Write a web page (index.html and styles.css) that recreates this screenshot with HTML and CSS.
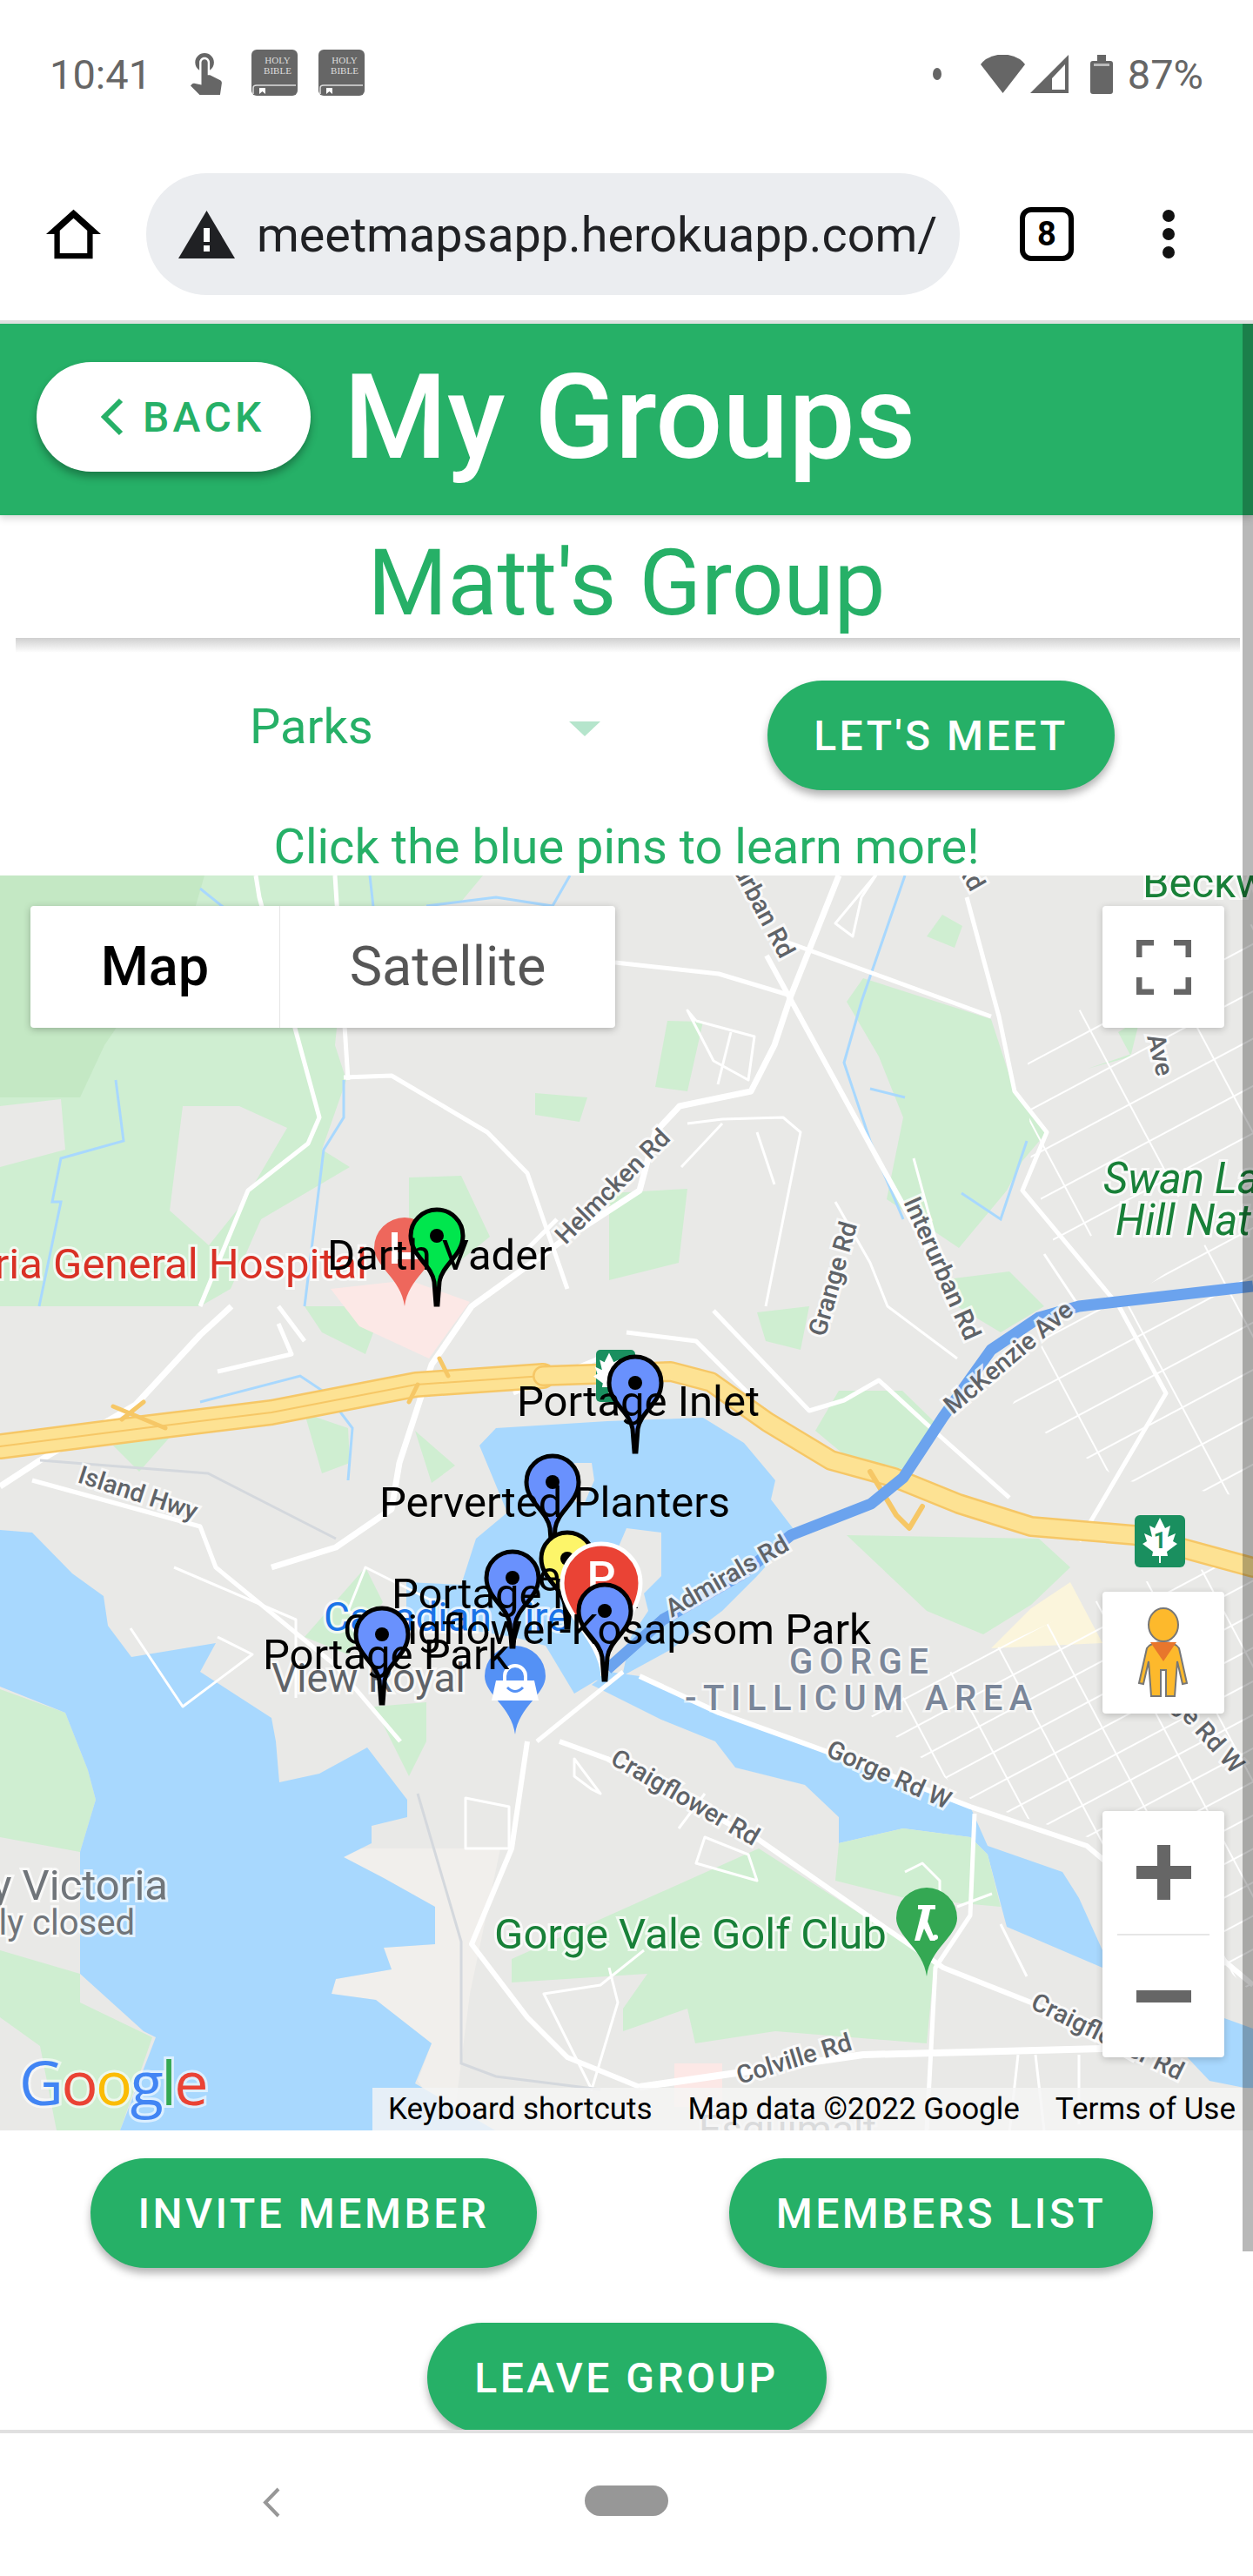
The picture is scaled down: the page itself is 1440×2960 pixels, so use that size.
FILE: index.html
```html
<!DOCTYPE html>
<html>
<head>
<meta charset="UTF-8">
<title>My Groups</title>
<link rel="stylesheet" href="styles.css">
</head>
<body>
  <!-- phone status bar -->
  <div class="status-bar">
    <span class="clock">10:41</span>
    <svg class="ic-touch" viewBox="5 3 15 20"><path fill="#666" d="M9 11.24V7.5C9 6.12 10.12 5 11.5 5S14 6.12 14 7.5v3.74c1.21-.81 2-2.18 2-3.74C16 5.01 13.99 3 11.5 3S7 5.01 7 7.5c0 1.56.79 2.93 2 3.74zm9.84 4.63l-4.54-2.26c-.17-.07-.35-.11-.54-.11H13v-6c0-.83-.67-1.5-1.5-1.5S10 6.67 10 7.5v10.74l-3.43-.72c-.08-.01-.15-.03-.24-.03-.31 0-.59.13-.79.33l-.79.8 4.94 4.94c.27.27.65.44 1.06.44h6.79c.75 0 1.33-.55 1.44-1.28l.75-5.27c.01-.07.02-.14.02-.2 0-.62-.38-1.16-.91-1.38z"/></svg>
    <svg class="ic-bible" viewBox="0 0 53 53">
      <rect width="53" height="53" rx="6" fill="#666"/>
      <path d="M2 51V44q0-3 4-3H51" fill="none" stroke="#ddd" stroke-width="1.5"/>
      <path d="M9 44h7v7l-3.500-3-3.500 3z" fill="#fff"/>
      <text class="bible-txt" x="30" y="16">HOLY</text>
      <text class="bible-txt" x="30" y="28">BIBLE</text>
    </svg>
    <svg class="ic-bible" viewBox="0 0 53 53">
      <rect width="53" height="53" rx="6" fill="#666"/>
      <path d="M2 51V44q0-3 4-3H51" fill="none" stroke="#ddd" stroke-width="1.5"/>
      <path d="M9 44h7v7l-3.500-3-3.500 3z" fill="#fff"/>
      <text class="bible-txt" x="30" y="16">HOLY</text>
      <text class="bible-txt" x="30" y="28">BIBLE</text>
    </svg>
    <span class="status-right">
      <span class="dot"></span>
      <svg class="ic-wifi" viewBox="0 0 53 44"><path fill="#666" d="M26.500 44L1 11Q3 8 7 5 26.500-6 46 5 50 8 52 11z"/></svg>
      <svg class="ic-signal" viewBox="0 0 44 44"><path fill="#666" fill-rule="evenodd" d="M44 0V44H0zM40 11L25 27V40H40z"/></svg>
      <svg class="ic-battery" viewBox="0 0 26 45"><path fill="#666" d="M8 0h10v7h5q3 0 3 3v32q0 3-3 3H3q-3 0-3-3V10q0-3 3-3h5z"/><rect x="4" y="10" width="18" height="3" fill="#bbb"/></svg>
      <span class="clock">87%</span>
    </span>
  </div>

  <!-- browser toolbar -->
  <div class="toolbar">
    <svg class="ic-home" viewBox="2 3 20 18"><path fill="#000" fill-rule="evenodd" d="M12 3L2 12h3v9h14v-9h3zM12 6.200l5 4.500V19H7v-8.300z"/></svg>
    <div class="url-pill">
      <svg class="ic-warn" viewBox="0 0 65 55"><path fill="#202124" d="M32.500 0L65 55H0z"/><rect x="29" y="20" width="7" height="16" fill="#fff"/><rect x="29" y="40" width="7" height="7" fill="#fff"/></svg>
      <span class="url-text">meetmapsapp.herokuapp.com/</span>
    </div>
    <div class="tab-count">8</div>
    <div class="menu-dots"><span></span><span></span><span></span></div>
  </div>

  <div class="page">
    <div class="app-header">
      <a class="back-btn">
        <svg class="ic-chevron" viewBox="0 0 26 44"><path d="M23 3L4 22l19 19" fill="none" stroke="#26b067" stroke-width="6"/></svg>
        BACK
      </a>
      <h1>My Groups</h1>
    </div>

    <h2 class="group-title">Matt's Group</h2>
    <div class="divider"></div>

    <div class="filter-row">
      <div class="select-box">
        <span>Parks</span>
        <span class="arrow"></span>
      </div>
      <button class="btn">LET'S MEET</button>
    </div>

    <p class="hint">Click the blue pins to learn more!</p>

    <div class="map">
      <svg class="map-canvas" viewBox="0 1005 1440 1442">
        <defs>
          <pattern id="grid" width="62" height="34" patternUnits="userSpaceOnUse" patternTransform="rotate(-28)">
            <path d="M0 0H62M0 0V34" fill="none" stroke="#fff" stroke-width="4"/>
          </pattern>
          <pattern id="grid-wide" width="110" height="48" patternUnits="userSpaceOnUse" patternTransform="rotate(-28)">
            <path d="M0 0H110M0 0V48" fill="none" stroke="#fff" stroke-width="4"/>
          </pattern>
          <path id="pin" d="M-1 0L-3-26C-6-46-30-56-30-79A30 30 0 1 1 30-79C30-56 6-46 3-26L1 0Z" stroke="#000" stroke-width="5"/>
          <path id="drop" d="M0 0C-4-32-35-46-35-67A35 35 0 1 1 35-67C35-46 4-32 0 0Z"/>
          <path id="leaf" d="M0-24L6-12 12-15 9-2 18-6 15 3 20 6 8 15 9 20H1V28H-1V20H-9L-8 15-20 6-15 3-18-6-9-2-12-15-6-12Z" fill="#fff"/>
        </defs>

        <rect x="0" y="1005" width="1440" height="1442" fill="#e9e9e7"/>

        <!-- parks -->
        <g fill="#cfeed1">
          <path d="M0 1005H555L530 1035 400 1050 385 1200 398 1240 370 1320 402 1340 300 1400 265 1480 230 1500H0z"/>
          <path fill="#c4e8c4" d="M0 1005H235L222 1050 120 1200 92 1260H0z"/>
          <path d="M992 1123L1139 1170 1166 1253 1203 1300 1175 1333 1157 1367 1102 1433 1019 1377 1038 1283 1010 1213 973 1150z"/>
          <path d="M767 1172L808 1173 790 1253 753 1248zM615 1255L675 1260 666 1288 615 1280zM1083 1050L1106 1063 1097 1088 1065 1075z"/>
          <path d="M1250 1227L1300 1213 1285 1185 1310 1170 1300 1210 1330 1200z"/>
          <path d="M470 1352L530 1350 563 1420 510 1463 470 1440zM700 1370L790 1365 780 1450 700 1470z"/>
          <path d="M350 1500H440L420 1555 370 1530zM870 1507L930 1500 920 1550 880 1540z"/>
          <path d="M1080 1470L1160 1460 1200 1500 1150 1530 1100 1500z"/>
          <path d="M964 1597L1037 1597 1074 1633 1037 1687 973 1673 937 1643z"/>
          <path d="M973 1763L1194 1767 1230 1800 1185 1843 1130 1877 1065 1850z"/>
          <path d="M350 1623L400 1640 402 1680 370 1692zM477 1643L523 1683 496 1703zM130 1660L200 1645 160 1690z"/>
          <path d="M350 1880L420 1800 440 1840 400 1900z"/>
          <path d="M872 2123L1074 2253 1065 2347 891 2333 799 2347 790 2307 716 2333 716 2307 744 2267 588 2277 588 2250z"/>
          <path d="M0 1940L75 1967 101 2033 110 2067 92 2127 0 2110zM0 2240L92 2267 92 2300 175 2340 138 2447H65L46 2350 0 2317z"/>
          <path d="M430 1960L490 1955 490 2000 470 2040z"/>
        </g>
        <path d="M0 1270L70 1262 75 1320 0 1340zM210 1270L275 1270 330 1295 280 1380 240 1430 195 1390z" fill="#e9e9e7"/>
        <path d="M1230 1817L1267 1887 1139 1893 1185 1847z" fill="#fbf5dc"/>
        <path d="M400 2123H575L540 2290 520 2447 480 2390 496 2347 432 2297 381 2290 386 2273 450 2262 441 2237 500 2233 500 2190 441 2157 395 2133z" fill="#f1efec"/>
        <path d="M380 1480L470 1470 540 1495 493 1560 413 1523z" fill="#fce8e6"/>
        <path d="M775 2370h55v50h-55z" fill="#fce8e6"/>

        <!-- water -->
        <g fill="#a8d8fe">
          <path d="M0 1757L37 1760 83 1807 119 1833 124 1867 151 1903 248 1887 230 1920 312 1973 317 2000 321 2047 367 2037 422 2007 468 2067 468 2087 427 2097 427 2117 395 2133 441 2157 500 2190 500 2233 441 2237 450 2262 386 2273 381 2290 432 2297 496 2347 477 2393 569 2447H138L179 2340 165 2333 92 2267 92 2127 110 2067 101 2033 75 1967 0 1937z"/>
          <path d="M551 1660L570 1640 698 1632 808 1628 855 1657 891 1700 886 1722 915 1760 870 1810 830 1850 770 1895 715 1925 685 1930 660 1945 627 1890 590 1880 467 1860 467 1817 530 1820 547 1767 583 1737z"/>
          <path fill="#e9e9e7" d="M660 1680L680 1680 683 1700 670 1730 655 1720zM720 1755L760 1760 760 1810 740 1830 745 1850 725 1880 715 1925 690 1925 690 1890 720 1830 705 1790z"/>
          <path d="M700 1920L735 1925 826 1967 918 2000 1000 2030 1115 2075 1135 2120 1221 2150 1240 2180 1267 2240 1330 2290 1440 2330V2400L1390 2390 1267 2260 1157 2213 1135 2130 1115 2110 1038 2100 964 2117 964 2087 925 2050 845 2030 822 2000 760 1975 700 1945 680 1935z"/>
        </g>
        <path d="M964 2117L1038 2100 1115 2110 1135 2130 1150 2190 1040 2180 960 2160z" fill="#cfeed1"/>

        <!-- thin streams -->
        <g fill="none" stroke="#a8d8fe" stroke-width="3">
          <path d="M230 1020L280 1060M425 1005L430 1050M490 1040L570 1030 635 1040 655 1005M1000 1250L1040 1260M133 1240L142 1310 70 1330 60 1380 70 1380 45 1500"/>
          <path d="M395 1240L395 1283 372 1320 350 1500M1040 1005L990 1150 970 1220 1000 1310 1038 1400M1180 1310L1150 1400 1105 1370"/>
          <path d="M230 1610L345 1580 375 1600 405 1640 400 1700"/>
        </g>

        <!-- residential grid -->
        <path d="M1130 1900L1300 1820 1440 1790V2290L1250 2110 1120 2070 1000 1970z" fill="url(#grid)"/>
        <path d="M1210 1520L1300 1490 1440 1390V1720L1290 1700 1160 1620z" fill="url(#grid-wide)"/>
        <path d="M1180 1190L1300 1130 1440 1060V1340L1290 1400 1215 1440 1185 1340z" fill="url(#grid-wide)"/>

        <!-- streets -->
        <g fill="none" stroke="#fff" stroke-width="5" stroke-linejoin="round">
          <path d="M294 1005L298 1030 367 1283 354 1313 285 1367 230 1500"/>
          <path d="M395 1237L450 1235 560 1300 606 1347 652 1480"/>
          <path d="M881 1097L1010 1333 1047 1400 1102 1500" stroke-width="6"/>
          <path d="M1111 1030L1148 1167 1166 1253 1203 1300 1175 1367 1286 1500 1340 1600 1240 1770"/>
          <path d="M707 1105L826 1118 909 1143M881 1073L1139 1167M385 1005L400 1240"/>
          <path d="M0 1707L46 1677 156 1613 230 1533 266 1500" stroke-width="7"/>
          <path d="M37 1700L230 1753 248 1800 386 1913 460 2000"/>
          <path d="M312 1800L386 1777 450 1733 459 1680 496 1567 542 1500 643 1427 735 1367 753 1300 781 1270 863 1253 890 1200 909 1143 964 1005" stroke-width="7"/>
          <path d="M617 2000L716 1920"/>
          <path d="M606 2000L588 2123 542 2233 606 2317 652 2363 735 2397" stroke-width="6"/>
          <path d="M735 1925L826 1967 918 2000 1000 2030 1115 2075 1249 2120 1440 2280" stroke-width="6"/>
          <path d="M643 2000L698 2020 872 2113 1001 2203 1084 2260 1185 2300 1304 2367" stroke-width="6"/>
          <path d="M1120 2083L1115 2200 1075 2260 1065 2447"/>
          <path d="M735 2397L992 2360 1267 2353" stroke-width="8"/>
          <path d="M820 1505L930 1620 970 1608 1010 1585 1070 1640 1160 1720M720 1530L800 1540 860 1600"/>
          <path d="M600 1440L640 1400M590 1600L700 1555M250 1575L335 1555 320 1520M320 1500L350 1540"/>
        </g>
        <g fill="none" stroke="#fff" stroke-width="3" stroke-linejoin="round">
          <path d="M800 1172L867 1190 860 1240 820 1218 790 1160 800 1172M840 1185L825 1245"/>
          <path d="M790 1290L830 1285 900 1283 920 1300 900 1400 880 1500M783 1340L830 1290M870 1300L890 1360"/>
          <path d="M1010 1000L960 1060 980 1075 990 1030zM960 1380L1000 1450 1020 1500 1100 1560"/>
          <path d="M1050 1330L1080 1440M1200 1440L1240 1500"/>
          <path d="M420 1800L500 1840 460 1880 400 1850zM200 1800L340 1860 340 1950M150 1870L210 1960 290 1900 250 1880"/>
          <path d="M660 2020L690 2060 680 2055 660 2040zM535 2065L585 2075 585 2123H535zM800 2140L870 2160 860 2130 810 2110zM780 2100L810 2060"/>
          <path d="M740 2240L690 2280 625 2290 680 2400 710 2300 700 2260"/>
          <path d="M1040 2150L1060 2140 1080 2160 1080 2190M1150 2210L1180 2270M1100 2190L1140 2175"/>
          <path d="M1160 2450L1170 2360M1190 2360L1200 2447M1240 2360V2440"/>
        </g>
        <path d="M480 2060L530 2230 530 2370 570 2385 690 2400M46 1677L239 1692 386 1767" fill="none" stroke="#d4d8dd" stroke-width="3"/>

        <!-- highway -->
        <g fill="none" stroke-linejoin="round" stroke-linecap="round">
          <path d="M0 1661L165 1640 312 1622 478 1590 624 1580" stroke="#f6c766" stroke-width="30"/>
          <path d="M0 1661L165 1640 312 1622 478 1590 624 1580" stroke="#fde293" stroke-width="25"/>
          <path d="M0 1661L165 1640 312 1622 478 1590 624 1580" stroke="#f6c766" stroke-width="2"/>
          <path d="M624 1580L771 1575 817 1587 882 1633 955 1677 1028 1697 1102 1727 1185 1753 1304 1763 1440 1800" stroke="#f6c766" stroke-width="24"/>
          <path d="M624 1580L771 1575 817 1587 882 1633 955 1677 1028 1697 1102 1727 1185 1753 1304 1763 1440 1800" stroke="#fde293" stroke-width="19"/>
          <path d="M140 1630L165 1610M130 1615L190 1640M505 1560L515 1580M470 1610L480 1590" stroke="#f6c766" stroke-width="5"/>
          <path d="M1000 1690L1030 1740 1045 1755 1060 1730" stroke="#f6c766" stroke-width="6"/>
        </g>
        <path d="M1440 1477L1240 1500 1194 1513 1139 1550 1084 1627 1038 1697 1001 1727 909 1763 854 1807 762 1860 698 1917" fill="none" stroke="#6ba3ee" stroke-width="13" stroke-linejoin="round"/>

        <!-- road and place names -->
        <g class="road-name">
          <text transform="translate(650 1430) rotate(-45)">Helmcken Rd</text>
          <text transform="translate(1038 1380) rotate(66)">Interurban Rd</text>
          <text class="t-end" transform="translate(897 1102) rotate(62)">Interurban Rd</text>
          <text transform="translate(948 1536) rotate(-74)">Grange Rd</text>
          <text transform="translate(1318 1190) rotate(76)">Ave</text>
          <text class="t-end" transform="translate(1116 1025) rotate(60)">Grange Rd</text>
          <text transform="translate(88 1702) rotate(18)">Island Hwy</text>
          <text transform="translate(700 2025) rotate(30)">Craigflower Rd</text>
          <text transform="translate(948 2016) rotate(24)">Gorge Rd W</text>
          <text transform="translate(1183 2306) rotate(26)">Craigflower Rd</text>
          <text transform="translate(850 2394) rotate(-17)">Colville Rd</text>
          <text transform="translate(1315 1925) rotate(48)">Gorge Rd W</text>
          <text transform="translate(1095 1625) rotate(-40)">McKenzie Ave</text>
          <text transform="translate(772 1858) rotate(-30)">Admirals Rd</text>
        </g>
        <text class="map-name c-red t-end" x="422" y="1468">ria General Hospital</text>
        <text class="map-name c-green" x="1313" y="1030">Beckw</text>
        <text class="map-name c-green c-italic" x="1268" y="1370">Swan La</text>
        <text class="map-name c-green c-italic" x="1282" y="1418">Hill Nat</text>
        <text class="map-name c-grey t-end" x="193" y="2182">y Victoria</text>
        <text class="map-name c-small c-grey t-end" x="155" y="2222">ily closed</text>
        <text class="map-name c-green" x="568" y="2238">Gorge Vale Golf Club</text>
        <text class="map-name c-mid c-blue" x="372" y="1873">Canadian Tire</text>
        <text class="map-name c-mid c-dark" x="312" y="1943">View Royal</text>
        <text class="area-name" x="907" y="1922">GORGE</text>
        <text class="area-name" x="787" y="1964">-TILLICUM AREA</text>
        <text class="map-name c-mid c-grey" x="803" y="2462">Esquimalt</text>

        <!-- map icons -->
        <rect x="685" y="1550" width="45" height="60" rx="5" fill="#1a8f5f"/>
        <use href="#leaf" transform="translate(700 1575) scale(.9)"/>
        <rect x="1304" y="1740" width="58" height="60" rx="6" fill="#1a8f5f"/>
        <use href="#leaf" transform="translate(1333 1767)"/>
        <text class="shield-num" x="1333" y="1778">1</text>

        <use href="#drop" transform="translate(465 1500)" fill="#ee675c"/>
        <rect x="450" y="1415" width="7" height="36" fill="#fff"/>
        <rect x="450" y="1438" width="30" height="8" fill="#fff"/>
        <use href="#drop" transform="translate(592 1992)" fill="#5491f5"/>
        <path d="M570 1930h44l5 23h-54z" fill="#fff"/>
        <path d="M580 1930v-5a12 12 0 0 1 24 0v5" fill="none" stroke="#fff" stroke-width="4"/>
        <path d="M583 1938q9 9 18 0" fill="none" stroke="#5491f5" stroke-width="3"/>
        <use href="#drop" transform="translate(1065 2270)" fill="#34a853"/>
        <path d="M1055 2188h20v5h-6l-3 14 9 22h-6l-7-14-5 14h-6l6-24 3-12h-5z" fill="#fff"/>
        <circle cx="1075" cy="2225" r="3" fill="#fff"/>

        <!-- markers -->
        <use href="#pin" transform="translate(502 1498)" fill="#00e64d"/>
        <circle cx="502" cy="1419" r="8"/>
        <text class="pin-label" x="376" y="1458">Darth Vader</text>

        <use href="#pin" transform="translate(730 1667)" fill="#6991fd"/>
        <circle cx="730" cy="1588" r="8"/>
        <text class="pin-label" x="594" y="1626">Portage Inlet</text>

        <use href="#pin" transform="translate(635 1781)" fill="#6991fd"/>
        <circle cx="635" cy="1702" r="8"/>
        <text class="pin-label" x="436" y="1742">Perverted Planters</text>

        <use href="#pin" transform="translate(652 1869)" fill="#fdf569"/>
        <circle cx="652" cy="1790" r="8"/>
        <text class="pin-label" x="618" y="1827">e</text>

        <use href="#pin" transform="translate(589 1891)" fill="#6991fd"/>
        <circle cx="589" cy="1812" r="8"/>
        <text class="pin-label" x="450" y="1847">Portage Park</text>

        <path d="M693 1923C688 1880 646 1855 646 1818A45 45 0 1 1 736 1818C736 1855 698 1880 693 1923Z" fill="#ea4335" stroke="#fff" stroke-width="5"/>
        <text class="park-letter" x="691" y="1830">P</text>

        <use href="#pin" transform="translate(695 1929)" fill="#6991fd"/>
        <circle cx="695" cy="1850" r="8"/>
        <text class="pin-label" x="394" y="1888">Craigflower-Kosapsom Park</text>

        <use href="#pin" transform="translate(439 1956)" fill="#6991fd"/>
        <circle cx="439" cy="1877" r="8"/>
        <text class="pin-label" x="302" y="1917">Portage Park</text>

        <text class="google-logo" x="22" y="2418"><tspan fill="#4285f4">G</tspan><tspan fill="#ea4335">o</tspan><tspan fill="#fbbc05">o</tspan><tspan fill="#4285f4">g</tspan><tspan fill="#34a853">l</tspan><tspan fill="#ea4335">e</tspan></text>
      </svg>

      <div class="map-type">
        <div class="map-type-btn active">Map</div>
        <div class="map-type-btn">Satellite</div>
      </div>

      <div class="map-ctrl ctrl-full">
        <svg viewBox="0 0 63 63" width="63" height="63"><path d="M3 20V3H20M43 3H60V20M60 43V60H43M20 60H3V43" fill="none" stroke="#666" stroke-width="7"/></svg>
      </div>

      <div class="map-ctrl ctrl-peg">
        <svg viewBox="0 0 60 104" width="60" height="104">
          <path d="M30 40c9 0 15 2 18 7l9 40-5 1-6-26-3 40H33V72h-6v30H16l-3-40-6 26-5-1 9-40c3-5 10-7 19-7z" fill="#fdb92c" stroke="#777" stroke-width="2"/>
          <ellipse cx="30" cy="20" rx="17" ry="19" fill="#fdb92c" stroke="#777" stroke-width="2"/>
          <path d="M15 40h30L30 62z" fill="#e8762c"/>
        </svg>
      </div>

      <div class="map-ctrl ctrl-zoom">
        <div class="zoom-btn"><svg viewBox="0 0 63 63" width="63" height="63"><path d="M24 0h15v24h24v15H39v24H24V39H0V24h24z" fill="#666"/></svg></div>
        <div class="zoom-line"></div>
        <div class="zoom-btn"><svg viewBox="0 0 63 14" width="63" height="14"><rect width="63" height="14" fill="#666"/></svg></div>
      </div>

      <div class="attribution">
        <span>Keyboard shortcuts</span>
        <span>Map data ©2022 Google</span>
        <span>Terms of Use</span>
      </div>
    </div>

    <div class="action-row">
      <button class="btn">INVITE MEMBER</button>
      <button class="btn">MEMBERS LIST</button>
    </div>
    <div class="leave-row">
      <button class="btn">LEAVE GROUP</button>
    </div>

    <div class="scrollbar"></div>
  </div>

  <!-- android nav -->
  <div class="nav-bar">
    <svg class="ic-navback" viewBox="0 0 20 35"><path d="M18 2L3 17.500 18 33" fill="none" stroke="#979797" stroke-width="4"/></svg>
    <span class="nav-pill"></span>
  </div>
</body>
</html>
```

FILE: styles.css
```css
body {
  margin: 0;
  width: 1440px;
  height: 2960px;
  overflow: hidden;
  background-color: #ffffff;
  font-family: Roboto, "Liberation Sans", sans-serif;
}

/* status bar */
.status-bar {
  display: flex;
  align-items: center;
  height: 170px;
  padding: 0 57px;
  box-sizing: border-box;
  color: #666666;
}
.clock {
  font-size: 47px;
}
.ic-touch {
  width: 37px;
  height: 48px;
  margin-left: 45px;
}
.ic-bible {
  width: 53px;
  height: 53px;
  margin-left: 33px;
  margin-top: -4px;
}
.ic-bible + .ic-bible {
  margin-left: 24px;
}
.bible-txt {
  font-family: "Liberation Serif", serif;
  font-size: 11px;
  fill: #dddddd;
  text-anchor: middle;
}
.status-right {
  display: flex;
  align-items: center;
  margin-left: auto;
}
.dot {
  width: 10px;
  height: 14px;
  border-radius: 50%;
  background-color: #666666;
  margin-right: 44px;
}
.ic-wifi {
  width: 53px;
  height: 44px;
}
.ic-signal {
  width: 44px;
  height: 44px;
  margin-left: 5px;
}
.ic-battery {
  width: 26px;
  height: 45px;
  margin-left: 25px;
  margin-right: 17px;
}

/* browser toolbar */
.toolbar {
  display: flex;
  align-items: center;
  height: 202px;
  box-sizing: border-box;
  border-bottom: 4px solid #e0e0e0;
}
.ic-home {
  width: 63px;
  height: 64px;
  margin-left: 53px;
}
.url-pill {
  display: flex;
  align-items: center;
  width: 935px;
  height: 140px;
  margin-left: 52px;
  padding-left: 37px;
  box-sizing: border-box;
  border-radius: 70px;
  background-color: #ebedf0;
  overflow: hidden;
}
.ic-warn {
  width: 65px;
  height: 55px;
  flex: none;
}
.url-text {
  margin: 2px 0 0 25px;
  font-size: 55.7px;
  color: #202124;
  white-space: nowrap;
}
.tab-count {
  width: 62px;
  height: 62px;
  margin-left: 69px;
  box-sizing: border-box;
  border: 6px solid #000000;
  border-radius: 13px;
  font-size: 38px;
  font-weight: 700;
  line-height: 50px;
  text-align: center;
}
.menu-dots {
  display: flex;
  flex-direction: column;
  gap: 7px;
  margin-left: 102px;
}
.menu-dots span {
  width: 14px;
  height: 14px;
  border-radius: 50%;
  background-color: #111111;
}

/* page */
.page {
  position: relative;
  height: 2420px;
  overflow: hidden;
}
.app-header {
  display: flex;
  align-items: center;
  height: 220px;
  padding: 0 0 6px 42px;
  box-sizing: border-box;
  background-color: #26b067;
  box-shadow: 0 4px 8px rgba(0,0,0,0.15);
}
.back-btn {
  display: flex;
  align-items: center;
  width: 315px;
  height: 126px;
  padding-left: 74px;
  box-sizing: border-box;
  border-radius: 63px;
  background-color: #ffffff;
  box-shadow: 0 6px 10px rgba(0,0,0,0.3);
  color: #26b067;
  font-size: 48px;
  font-weight: 500;
  letter-spacing: 4.3px;
}
.ic-chevron {
  width: 26px;
  height: 44px;
  margin-right: 22px;
}
h1 {
  margin: 0 0 0 38px;
  color: #ffffff;
  font-size: 136px;
  font-weight: 500;
}
.group-title {
  margin: 0;
  padding-top: 16px;
  color: #26b067;
  font-size: 105px;
  font-weight: 400;
  line-height: 125px;
  text-align: center;
}
.divider {
  height: 17px;
  margin: 0 15px 0 18px;
  background: linear-gradient(#cfcfcf, #ffffff);
}
.filter-row {
  display: flex;
  padding: 32px 0 0 287px;
}
.select-box {
  display: flex;
  align-items: center;
  justify-content: space-between;
  width: 403px;
  height: 106px;
  color: #26b067;
  font-size: 56px;
}
.arrow {
  width: 0;
  height: 0;
  margin-top: 4px;
  border-left: 18px solid transparent;
  border-right: 18px solid transparent;
  border-top: 17px solid #b5e5cc;
}
.filter-row .btn {
  margin-left: 192px;
  width: 399px;
}
.btn {
  height: 126px;
  padding: 0;
  border: none;
  border-radius: 63px;
  background-color: #26b067;
  box-shadow: 0 6px 10px rgba(0,0,0,0.3);
  color: #ffffff;
  font-family: inherit;
  font-size: 48px;
  font-weight: 500;
  letter-spacing: 3.5px;
}
.hint {
  margin: 33px 0 0;
  color: #26b067;
  font-size: 56px;
  line-height: 65px;
  text-align: center;
}

/* map */
.map {
  position: relative;
  height: 1442px;
  overflow: hidden;
}
.map-canvas {
  display: block;
  width: 1440px;
  height: 1442px;
}
.road-name text {
  font-size: 29px;
  font-weight: 500;
  fill: #5f6368;
  stroke: #ffffff;
  stroke-width: 6px;
  stroke-opacity: 0.75;
  paint-order: stroke;
}
.road-name .t-end, .t-end {
  text-anchor: end;
}
.map-name {
  font-size: 49px;
  paint-order: stroke;
  stroke: #ffffff;
  stroke-width: 6px;
  stroke-opacity: 0.7;
}
.c-red { fill: #d93025; }
.c-green { fill: #188038; }
.c-blue { fill: #1a73e8; }
.c-grey { fill: #70757a; }
.c-dark { fill: #5f6368; }
.c-italic { font-style: italic; }
.c-mid { font-size: 46px; }
.c-small { font-size: 40px; }
.area-name {
  font-size: 40px;
  font-weight: 500;
  letter-spacing: 7.5px;
  fill: #7a8699;
  paint-order: stroke;
  stroke: #ffffff;
  stroke-width: 5px;
  stroke-opacity: 0.6;
}
.shield-num {
  font-size: 26px;
  font-weight: 700;
  fill: #1a8f5f;
  text-anchor: middle;
}
.pin-label {
  font-size: 49px;
  fill: #000000;
}
.park-letter {
  font-size: 52px;
  font-weight: 500;
  fill: #ffffff;
  text-anchor: middle;
}
.google-logo {
  font-family: "Open Sans", sans-serif;
  font-size: 70px;
  font-weight: 500;
  letter-spacing: -2.5px;
  paint-order: stroke;
  stroke: #ffffff;
  stroke-width: 6px;
  stroke-opacity: 0.6;
}
.map-type {
  position: absolute;
  top: 35px;
  left: 35px;
  display: flex;
  height: 140px;
  border-radius: 4px;
  background-color: #ffffff;
  box-shadow: 0 2px 8px rgba(0,0,0,0.25);
  font-size: 63px;
  line-height: 140px;
  color: #565656;
}
.map-type-btn {
  width: 386px;
  text-align: center;
  border-left: 1px solid #e6e6e6;
  box-sizing: border-box;
}
.map-type-btn.active {
  width: 286px;
  border-left: none;
  color: #000000;
  font-weight: 500;
}
.map-ctrl {
  position: absolute;
  left: 1267px;
  display: flex;
  align-items: center;
  justify-content: center;
  width: 140px;
  height: 140px;
  border-radius: 4px;
  background-color: #ffffff;
  box-shadow: 0 2px 8px rgba(0,0,0,0.2);
}
.ctrl-full { top: 35px; }
.ctrl-peg { top: 823px; }
.ctrl-zoom {
  top: 1075px;
  height: 283px;
  flex-direction: column;
}
.zoom-btn {
  display: flex;
  align-items: center;
  justify-content: center;
  width: 140px;
  height: 141px;
}
.zoom-line {
  width: 106px;
  height: 2px;
  background-color: #e6e6e6;
}
.attribution {
  position: absolute;
  right: 0;
  bottom: 0;
  display: flex;
  justify-content: space-between;
  width: 1012px;
  height: 49px;
  padding: 0 20px 0 18px;
  box-sizing: border-box;
  background-color: rgba(245,245,245,0.8);
  color: #000000;
  font-size: 35px;
  line-height: 49px;
}

/* bottom buttons */
.action-row {
  display: flex;
  gap: 221px;
  padding: 32px 0 0 104px;
}
.action-row .btn:first-child {
  width: 513px;
}
.action-row .btn:last-child {
  width: 487px;
}
.leave-row {
  padding-top: 63px;
  text-align: center;
}
.leave-row .btn {
  width: 459px;
}
.scrollbar {
  position: absolute;
  top: 0;
  right: 0;
  width: 12px;
  height: 2215px;
  background-color: rgba(0,0,0,0.28);
}

/* android nav */
.nav-bar {
  position: relative;
  display: flex;
  align-items: center;
  justify-content: center;
  height: 164px;
  border-top: 4px solid #e0e0e0;
  box-sizing: border-box;
}
.ic-navback {
  position: absolute;
  left: 302px;
  top: 62px;
  width: 20px;
  height: 35px;
}
.nav-pill {
  width: 96px;
  height: 35px;
  margin-top: -5px;
  border-radius: 18px;
  background-color: #979797;
}
```
